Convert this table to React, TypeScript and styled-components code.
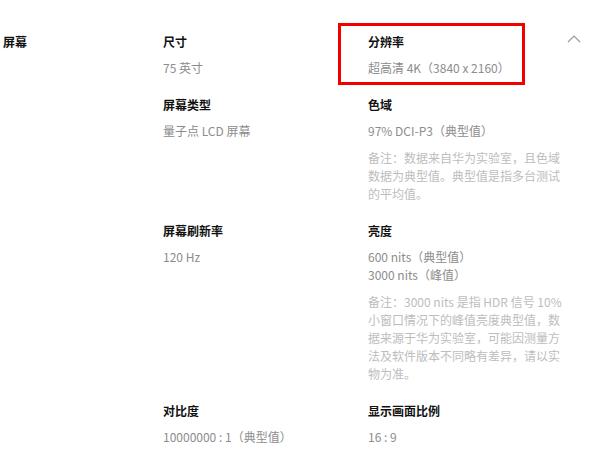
import React from 'react';
import styled, { createGlobalStyle } from 'styled-components';

const GlobalStyle = createGlobalStyle`
  html, body {
    margin: 0;
    padding: 0;
    background: #ffffff;
  }
  body {
    font-family: "Noto Sans CJK SC", "Noto Sans", sans-serif;
    -webkit-font-smoothing: antialiased;
  }
`;

const Section = styled.section`
  display: flex;
  width: 600px;
  padding-top: 33px;
  box-sizing: border-box;
`;

const SectionLabel = styled.div`
  width: 160px;
  padding-left: 3px;
  font-size: 12px;
  line-height: 18px;
  font-weight: 700;
  color: #111;
`;

const SpecGrid = styled.div`
  display: grid;
  grid-template-columns: 205px 196px;
`;

const Item = styled.div`
  position: relative;
  padding-bottom: 19px;
`;

const Title = styled.div`
  font-size: 12px;
  line-height: 18px;
  font-weight: 700;
  color: #111;
  margin-bottom: 8px;
`;

const Value = styled.div`
  font-size: 12px;
  line-height: 18px;
  color: #8c8c8c;
`;

const Note = styled.div`
  margin-top: 9px;
  font-size: 12px;
  line-height: 18px;
  color: #bdbdbd;
`;

const Highlight = styled.div`
  position: absolute;
  top: -10px;
  left: -30px;
  width: 187px;
  height: 62px;
  border: 3px solid #f20000;
  box-sizing: border-box;
  pointer-events: none;
`;

const Toggle = styled.div`
  flex: 1;
  display: flex;
  justify-content: flex-end;
  padding-right: 19px;
  padding-top: 2px;
`;

type Spec = {
  title: string;
  values: string[];
  note?: string;
  marked?: boolean;
};

const specs: Spec[] = [
  { title: '尺寸', values: ['75 英寸'] },
  { title: '分辨率', values: ['超高清 4K（3840 x 2160）'], marked: true },
  { title: '屏幕类型', values: ['量子点 LCD 屏幕'] },
  {
    title: '色域',
    values: ['97% DCI-P3（典型值）'],
    note: '备注：数据来自华为实验室，且色域数据为典型值。典型值是指多台测试的平均值。',
  },
  { title: '屏幕刷新率', values: ['120 Hz'] },
  {
    title: '亮度',
    values: ['600 nits（典型值）', '3000 nits（峰值）'],
    note: '备注：3000 nits 是指 HDR 信号 10% 小窗口情况下的峰值亮度典型值，数据来源于华为实验室，可能因测量方法及软件版本不同略有差异，请以实物为准。',
  },
  { title: '对比度', values: ['10000000 : 1（典型值）'] },
  { title: '显示画面比例', values: ['16 : 9'] },
];

const App = () => {
  return (
    <>
      <GlobalStyle />
      <Section>
        <SectionLabel>屏幕</SectionLabel>
        <SpecGrid>
          {specs.map((s) => (
            <Item key={s.title}>
              {s.marked && <Highlight />}
              <Title>{s.title}</Title>
              {s.values.map((v) => (
                <Value key={v}>{v}</Value>
              ))}
              {s.note && <Note>{s.note}</Note>}
            </Item>
          ))}
        </SpecGrid>
        <Toggle>
          <svg width="14" height="8" viewBox="0 0 14 8">
            <polyline points="1,7 7,1 13,7" fill="none" stroke="#9a9a9a" strokeWidth="1.2" />
          </svg>
        </Toggle>
      </Section>
    </>
  );
};

export default App;
